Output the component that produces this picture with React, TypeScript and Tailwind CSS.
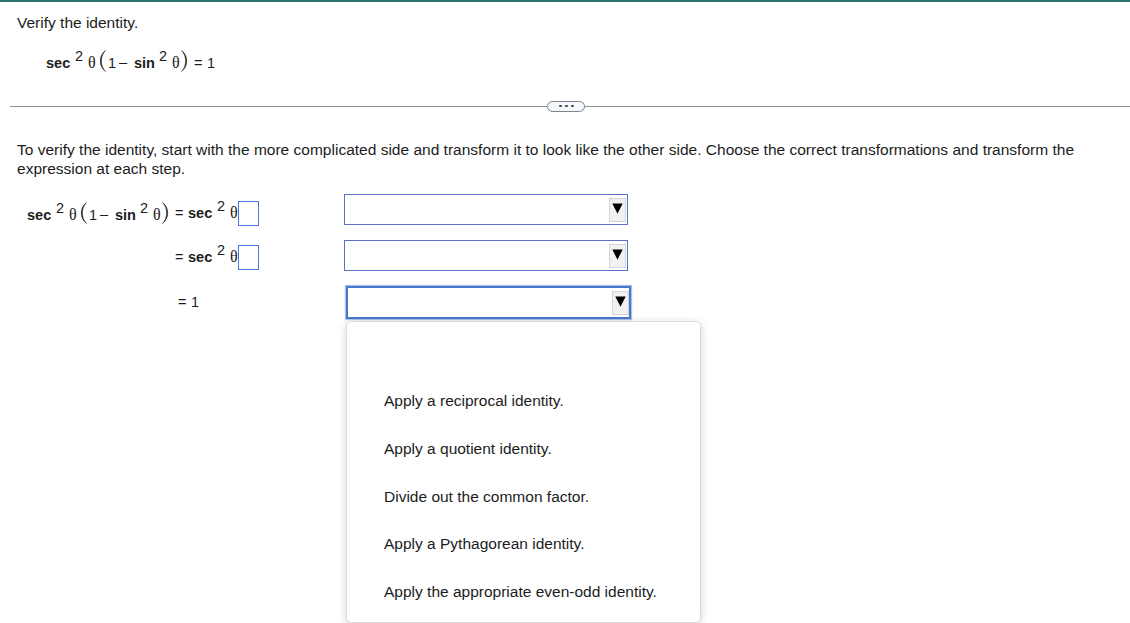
import React, { useState } from 'react';
import clsx from 'clsx';

const OPTIONS = [
    '',
    'Apply a reciprocal identity.',
    'Apply a quotient identity.',
    'Divide out the common factor.',
    'Apply a Pythagorean identity.',
    'Apply the appropriate even-odd identity.'
];

const Theta = ({ className = 'w-[11px]' }: { className?: string }) => (
    <span className={clsx("shrink-0 font-['Liberation_Serif',serif] text-[16px]", className)}>θ</span>
);

const Squared = () => (
    <span className="relative -top-[7px] w-[13px] shrink-0 text-[14.5px]">2</span>
);

const Paren = ({ side }: { side: 'left' | 'right' }) => (
    <svg className={clsx('h-[22px] w-[7px] shrink-0 translate-y-[4px]', side === 'left' ? 'mr-[2px]' : 'mr-[6px] -scale-x-100')} viewBox="0 0 7 22">
        <path d="M6.4 0.6C-0.4 5.5 -0.4 16.5 6.4 21.4C1 16 1 6 6.4 0.6Z" fill="#222" stroke="#222" strokeWidth="0.6" />
    </svg>
);

// sec² θ (1 − sin² θ)
const LeftSide = () => (
    <>
        <b className="w-[29px] shrink-0">sec</b>
        <Squared />
        <Theta />
        <Paren side="left" />
        <span className="w-[11px] shrink-0">1</span>
        <span className="w-[15px] shrink-0 -translate-y-px">–</span>
        <b className="w-[25px] shrink-0">sin</b>
        <Squared />
        <Theta className="w-[9px]" />
        <Paren side="right" />
    </>
);

const SecSquared = () => (
    <>
        <b className="w-[29px] shrink-0">sec</b>
        <Squared />
        <Theta className="w-[8px]" />
    </>
);

const AnswerBox = () => (
    <span className="h-[25px] w-[21px] shrink-0 translate-y-[8px] border border-[#4a74d8] bg-white" />
);

interface DropdownProps {
    value: string;
    active?: boolean;
    className?: string;
    onClick?: () => void;
}

const Dropdown = ({ value, active, className, onClick }: DropdownProps) => (
    <button
        onClick={onClick}
        className={clsx(
            'flex items-start justify-between bg-white text-left',
            active
                ? 'h-[33px] w-[285px] border-2 border-[#4a78c8] shadow-[0_0_1px_1px_#a9c3f0]'
                : 'h-[31px] w-[284px] border border-[#5a70c8]',
            className
        )}
    >
        <span className="pl-2">{value}</span>
        <span className={clsx('mt-[3px] flex h-[24px] w-[17px] justify-center border border-[#d4d4d4] bg-[#f1f1f1]', !active && 'mr-px')}>
            <svg className="mt-[4px] h-[11px] w-[11px]" viewBox="0 0 11 11">
                <path d="M0.3 0.5H10.7L5.5 10.8Z" fill="#000" />
            </svg>
        </span>
    </button>
);

const App = () => {
    const [isOpen, setIsOpen] = useState(true);
    const [selected, setSelected] = useState('');

    return (
        <div className="h-[623px] w-[1130px] overflow-hidden border-t-2 border-[#2f7370] bg-white font-['Liberation_Sans',Arial,sans-serif] text-[15.5px] leading-[20px] text-[#1c1c1c]">
            {/* Question */}
            <div className="h-[104px] pt-[11px] pl-[17px]">
                <p>Verify the identity.</p>
                <div className="mt-[13px] ml-[29px] flex items-baseline text-[14.5px]">
                    <LeftSide />
                    <span className="w-[13px] shrink-0">=</span>
                    <span>1</span>
                </div>
            </div>

            {/* Divider */}
            <div className="-mt-[6px] ml-[10px] flex h-[12px] items-center">
                <div className="h-px w-[537px] bg-[#8c9094]" />
                <div className="flex h-[11px] w-[38px] items-center justify-center gap-[3px] rounded-[6px] border border-[#7d838b] bg-[#f4f8fd]">
                    <span className="h-[2px] w-[3px] rounded-full bg-[#444]" />
                    <span className="h-[2px] w-[3px] rounded-full bg-[#444]" />
                    <span className="h-[2px] w-[3px] rounded-full bg-[#444]" />
                </div>
                <div className="h-px flex-1 bg-[#8c9094]" />
            </div>

            <p className="mt-[28px] w-[1090px] pl-[17px] leading-[19px] tracking-[0.007px]">
                To verify the identity, start with the more complicated side and transform it to look like the other side. Choose the correct transformations and transform the expression at each step.
            </p>

            {/* Steps */}
            <div className="mt-[16px] flex">
                <div className="w-[344px] shrink-0 text-[14.5px]">
                    <div className="flex h-[43px] items-baseline pt-px pl-[27px]">
                        <LeftSide />
                        <div className="flex -translate-y-[2px] items-baseline">
                            <span className="w-[13px] shrink-0">=</span>
                            <SecSquared />
                            <AnswerBox />
                        </div>
                    </div>
                    <div className="flex h-[55px] items-baseline pl-[175px]">
                        <span className="w-[13px] shrink-0">=</span>
                        <SecSquared />
                        <AnswerBox />
                    </div>
                    <div className="flex items-baseline pl-[178px]">
                        <span className="w-[13px] shrink-0">=</span>
                        <span>1</span>
                    </div>
                </div>

                <div className="flex flex-col items-start">
                    <Dropdown value="" />
                    <Dropdown value="" className="mt-[15px]" />
                    <div className="relative mt-[15px] ml-[2px]">
                        <Dropdown value={selected} active onClick={() => setIsOpen(!isOpen)} />
                        {isOpen && (
                            <ul className="absolute top-[35px] left-0 h-[302px] w-[355px] rounded-[5px] border border-[#dcdcdc] bg-white pt-[7.5px] shadow-[0_2px_9px_rgba(0,0,0,0.17)]">
                                {OPTIONS.map((option) => (
                                    <li
                                        key={option}
                                        onClick={() => {
                                            setSelected(option);
                                            setIsOpen(false);
                                        }}
                                        className="flex h-[47.75px] cursor-pointer items-center pl-[37px]"
                                    >
                                        {option}
                                    </li>
                                ))}
                            </ul>
                        )}
                    </div>
                </div>
            </div>
        </div>
    );
};

export default App;
